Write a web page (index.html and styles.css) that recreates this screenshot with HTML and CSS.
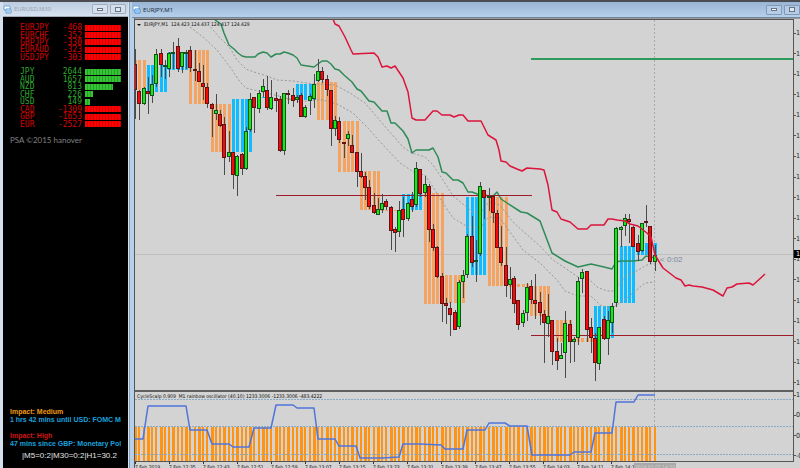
FILE: index.html
```html
<!DOCTYPE html>
<html lang="en">
<head>
  <meta charset="UTF-8" />
  <meta name="viewport" content="width=device-width, initial-scale=1.0" />
  <title>EURJPY,M1</title>
  <link rel="stylesheet" href="styles.css">
</head>
<body>
  <section class="window side">
    <header class="titlebar">
      <svg class="app-icon" viewBox="0 0 9 9"><path d="M1 1h6v4H1z" fill="#fff" stroke="#6fa8dc"/><path d="M3 4h5v4H3z" fill="#eaf4ff" stroke="#5b9bd5"/><path d="M4 6h3" stroke="#5b9bd5"/></svg>
      <h1>EURUSD,M30</h1>
      <button class="win-btn" aria-label="Minimize"><span class="min"></span></button>
      <button class="win-btn" aria-label="Maximize"><span class="max"></span></button>
    </header>
    <div class="strength">
      <table class="pairs">
        <tbody id="pairs"></tbody>
      </table>
      <table class="currencies">
        <tbody id="currencies"></tbody>
      </table>
      <p class="credit">PSA ©2015 hanover</p>
      <div class="news">
        <p class="medium">Impact: Medium</p>
        <p>1 hrs 42 mins until USD: FOMC Member</p>
        <p class="high">Impact: High</p>
        <p>47 mins since GBP: Monetary Policy</p>
        <p class="spread">|M5=0:2|M30=0:2|H1=30.2</p>
      </div>
    </div>
  </section>

  <section class="window chart">
    <header class="titlebar">
      <svg class="app-icon" viewBox="0 0 9 9"><path d="M1 1h6v4H1z" fill="#fff" stroke="#6fa8dc"/><path d="M3 4h5v4H3z" fill="#eaf4ff" stroke="#3f8fdc"/><path d="M4 6h3" stroke="#3f8fdc"/></svg>
      <h1>EURJPY,M1</h1>
      <button class="win-btn" aria-label="Minimize"><span class="min"></span></button>
      <button class="win-btn" aria-label="Maximize"><span class="max"></span></button>
    </header>
    <div class="sheet">
      <div class="pane price-pane">
        <svg id="price" class="plot"></svg>
        <p class="legend"><span class="arrow"></span>EURJPY,M1&nbsp; 124.423 124.437 124.417 124.429</p>
      </div>
      <div class="scale price-scale" id="scale"></div>
      <div class="pane osc-pane">
        <svg id="osc" class="plot"></svg>
        <p class="legend">CycleScalp 0.909 &nbsp;M1 rainbow oscillator (40,10) 1233.3006 -1233.3006 -483.4222</p>
      </div>
      <div class="scale osc-scale"><span>1</span><span>0.8</span><span class="mid">0</span><span>-0.8</span></div>
      <div class="times" id="times"></div>
    </div>
  </section>

  <script src="script.js"></script>
</body>
</html>
```
FILE: styles.css
```css
* {
  box-sizing: border-box;
}

body {
  margin: 0;
  height: 100vh;
  display: flex;
  overflow: hidden;
  border-top: 2px solid #4b4d52;
  background: #b7d0ea;
  font-family: "Noto Sans", "Liberation Sans", sans-serif;
}

h1, p {
  margin: 0;
}

h1 {
  font-weight: normal;
}

.window {
  display: flex;
  flex-direction: column;
}

.titlebar {
  display: flex;
  align-items: center;
  gap: 2px;
  flex: none;
  height: 16px;
}

.titlebar h1 {
  flex: 1;
  font-size: 6px;
  line-height: 10px;
  color: #1b2b40;
}

.app-icon {
  width: 9px;
  height: 9px;
}

.win-btn {
  display: flex;
  justify-content: center;
  align-items: center;
  width: 16px;
  height: 10px;
  padding: 0;
  border: 1px solid #8399b5;
  border-radius: 1px;
  background: #b4cce8;
}

.min {
  width: 6px;
  height: 3px;
  border: 1px solid #6a7482;
  background: #fff;
}

.max {
  width: 6px;
  height: 5px;
  border: 1px solid #6a7482;
  background: #dfe6ee;
}

/* left window */
.side {
  flex: none;
  width: 129px;
  padding: 0 1px 0 3px;
  background: #d3e0ee;
}

.side .titlebar {
  height: 15px;
  padding-right: 2px;
  border-bottom: 1px solid #a3abb5;
  background: linear-gradient(#bccde0, #d6e2ef);
}

.side .titlebar h1 {
  color: #98a2ae;
}

.side .win-btn {
  background: #d3dfec;
  border-color: #a2acba;
}

.strength {
  flex: 1;
  display: flex;
  flex-direction: column;
  padding: 7px 7px 6px;
  background: #000;
}

table {
  border-collapse: collapse;
  margin-left: 10px;
  width: 101px;
  table-layout: fixed;
  font: 8px/7px "DejaVu Sans Mono", monospace;
}

td {
  padding: 0;
}

td:nth-child(1) {
  width: 32px;
}

td:nth-child(2) {
  width: 30px;
  text-align: right;
}

td:nth-child(3) {
  width: 39px;
  padding-left: 3px;
}

.pairs {
  height: 37px;
}

.currencies {
  height: 60px;
  margin-top: 7px;
}

.down {
  color: #d80000;
}

.up {
  color: #2fa82f;
}

.bar {
  display: block;
  height: 6px;
  background: repeating-linear-gradient(90deg, #ff0000 0 2px, #d00000 2px 3px);
}

.up .bar {
  background: repeating-linear-gradient(90deg, #35c435 0 2px, #27a027 2px 3px);
}

.credit {
  margin-top: 7px;
  font-family: Lato, "Liberation Sans", sans-serif;
  font-size: 8px;
  line-height: 11px;
  color: #808080;
}

.news {
  margin-top: auto;
  overflow: hidden;
  white-space: nowrap;
  font: bold 7px/8px "Liberation Sans", sans-serif;
  color: #1aa0dc;
}

.news .medium {
  color: #f09a10;
}

.news .high {
  margin-top: 8px;
  color: #d01414;
}

.news .spread {
  margin: 2px 0 0 12px;
  font-weight: normal;
  font-size: 8px;
  line-height: 12px;
  color: #e4e4e4;
}

/* chart window */
.chart {
  flex: 1;
  min-width: 0;
  padding-left: 4px;
  border-left: 1px solid #8d9fb4;
}

.chart .titlebar {
  margin-left: -2px;
  background: linear-gradient(#9ab5d4, #b5cfeb);
  border-bottom: 1px solid #75879c;
}

.sheet {
  flex: 1;
  display: grid;
  grid-template-columns: 1fr 6px;
  grid-template-rows: 371px 72px auto;
  border-left: 1px solid #555;
  border-top: 1px solid #999;
  background: #d3d3d3;
}

.pane {
  position: relative;
  min-width: 0;
  border-right: 1px solid #555;
  border-top: 1px solid #555;
}

.osc-pane {
  border-top: 2px solid #606060;
  border-bottom: 1px solid #555;
}

.plot {
  display: block;
  width: 100%;
  height: 100%;
}

.legend {
  position: absolute;
  left: 2px;
  top: 0;
  font: 5px/8px "DejaVu Sans Condensed", "DejaVu Sans", sans-serif;
  color: #111;
  white-space: nowrap;
}

.arrow {
  display: inline-block;
  margin-right: 3px;
  border: 2px solid transparent;
  border-top-color: #111;
  border-bottom: 0;
  vertical-align: middle;
}

.scale {
  position: relative;
  display: flex;
  flex-direction: column;
  justify-content: space-between;
  overflow: hidden;
  font: 7px/8px "DejaVu Sans Condensed", "DejaVu Sans", sans-serif;
  color: #222;
}

.scale span {
  padding-left: 2px;
  background: linear-gradient(#555, #555) 0 50% / 2px 1px no-repeat;
}

.price-scale {
  padding: 10px 0 3px;
}

.scale .now {
  position: absolute;
  left: 0;
  top: 231px;
  width: 100%;
  background: #000;
  color: #fff;
}

.osc-scale {
  padding: 1px 0 2px;
}

.times {
  grid-column: 1 / -1;
  position: relative;
  display: flex;
  overflow: hidden;
  height: 12px;
  font: 5px/11px "DejaVu Sans Condensed", "DejaVu Sans", sans-serif;
  color: #111;
}

.times span {
  flex: none;
  width: 34px;
  white-space: nowrap;
  background: linear-gradient(#333, #333) 0 0 / 1px 2px no-repeat;
}

.times .cursor {
  position: absolute;
  left: 499px;
  top: 1px;
  width: 42px;
  background: #a9a9a9;
  color: #d3d3d3;
  line-height: 9px;
  text-align: center;
}

/* drawing */
.band-up { fill: #0ebcff; }
.band-down { fill: #f4a460; }
.wick { fill: #4a4a4a; }
.bull-edge { fill: #14501c; }
.bear-edge { fill: #5c1414; }
.bull { fill: #10ee10; }
.bear { fill: #f80808; }
.bands, .candles, .bars, .levels { shape-rendering: crispEdges; }
.line { fill: none; stroke-width: 1.5; stroke-linejoin: round; }
.slow { stroke: #2e8b57; }
.stop { stroke: #dc143c; }
.line.average { stroke: #999; stroke-width: 1; stroke-dasharray: 2 2; }
.level-red { stroke: #9a1c28; }
.level-green { stroke: #2e9a5c; stroke-width: 2; }
.bid { stroke: #bdbdbd; }
.cursor-line { stroke: #aaa; stroke-dasharray: 2 2; }
.countdown { font: 8px "Liberation Sans", sans-serif; fill: #778899; }
.bars rect { fill: #ff9412; }
.osc-level { stroke: #86a9c6; stroke-dasharray: 2 1; }
.cycle { stroke: #4f74dc; }
```
FILE: script.js
```js
const pairs = [
  ['EURJPY', -468, 36], ['EURCHF', -352, 36], ['GBPJPY', -330, 36],
  ['EURAUD', -323, 36], ['USDJPY', -303, 36]
];
const currencies = [
  ['JPY', 2644, 36], ['AUD', 1657, 36], ['NZD', 813, 28], ['CHF', 226, 8],
  ['USD', 149, 5], ['CAD', -1309, 36], ['GBP', -1653, 36], ['EUR', -2527, 36]
];

const rows = (list) => list.map(([name, value, width]) =>
  `<tr class="${value < 0 ? 'down' : 'up'}"><td>${name}</td><td>${value}</td>` +
  `<td><span class="bar" style="width:${width}px"></span></td></tr>`).join('');

document.getElementById('pairs').innerHTML = rows(pairs);
document.getElementById('currencies').innerHTML = rows(currencies);

// high, low, body top, body bottom, 1 = bull / 0 = bear
const candles = [
  [49,119,64,90,0],[90,120,91,104,0],[87,105,88,104,1],[77,114,91,94,0],[75,103,84,96,1],
  [49,87,54,84,1],[49,77,53,65,0],[60,79,65,67,1],[52,77,53,69,1],[42,69,52,53,1],
  [38,72,46,69,0],[52,73,52,67,1],[50,69,52,53,1],[46,72,50,68,0],[50,81,69,70,0],
  [63,82,71,82,0],[65,100,83,87,0],[83,108,87,104,0],[103,137,104,109,0],[94,120,110,114,1],
  [110,127,114,126,0],[117,175,124,158,0],[131,162,152,157,1],[152,189,152,175,0],[155,196,156,176,1],
  [153,175,154,169,0],[127,170,131,169,1],[93,132,99,130,1],[97,133,97,108,0],[90,113,93,109,1],
  [79,97,86,92,1],[76,110,90,108,0],[80,110,97,109,1],[92,112,98,101,0],[96,152,99,151,0],
  [93,155,93,151,1],[90,104,93,94,0],[88,107,95,101,0],[95,103,97,100,1],[93,117,95,117,0],
  [105,118,107,117,1],[94,115,96,101,1],[74,108,84,99,1],[59,82,71,81,1],[67,83,71,80,0],
  [75,96,79,90,0],[90,146,90,129,0],[116,136,120,129,1],[117,143,121,140,0],[142,158,142,143,0],
  [131,146,134,139,1],[135,153,145,153,0],[152,187,152,172,0],[153,178,171,177,0],[172,200,176,188,0],
  [180,209,187,207,0],[193,214,205,213,0],[198,215,209,215,1],[194,213,203,210,1],[199,210,201,207,0],
  [206,250,207,231,0],[227,252,229,233,0],[201,237,210,232,1],[197,237,209,220,0],[202,221,203,219,1],
  [192,212,199,207,0],[162,207,168,205,1],[169,197,169,194,0],[176,197,184,193,1],[184,242,186,230,0],
  [224,251,229,248,0],[246,278,247,277,0],[273,322,276,304,0],[298,324,303,306,0],[302,336,308,315,0],
  [310,330,312,330,0],[280,329,282,327,1],[270,298,275,282,1],[234,278,236,275,1],[216,267,236,263,0],
  [240,282,260,262,1],[182,256,186,254,1],[190,219,190,198,0],[188,211,196,197,1],[195,223,196,213,0],
  [210,248,213,248,0],[226,266,247,263,0],[247,297,265,286,0],[267,299,279,285,1],[276,313,278,304,0],
  [300,330,300,325,0],[310,327,313,323,1],[283,321,287,313,1],[280,304,286,300,0],[274,319,300,304,0],
  [292,325,302,313,0],[310,363,314,323,0],[294,337,316,324,1],[320,365,320,352,0],[338,370,351,361,0],
  [343,359,355,359,1],[311,378,323,353,1],[320,363,324,342,0],[337,362,339,342,1],[277,345,281,338,1],
  [269,293,272,279,1],[271,342,271,330,0],[318,353,327,338,0],[333,381,338,363,0],[327,370,327,364,1],
  [316,340,319,339,0],[311,355,320,339,1],[303,333,306,323,1],[227,307,228,303,1],[226,247,227,230,1],
  [214,236,218,226,1],[214,243,219,222,0],[226,247,227,247,0],[235,261,243,252,0],[223,252,223,251,1],
  [205,227,221,223,0],[226,264,226,262,0],[245,271,255,262,1]
];

// first candle, last candle, top, bottom, 1 = up / 0 = down
const bands = [
  [0,2,60,90,0],[3,7,65,92,1],[8,12,52,70,1],[13,17,50,104,0],[18,22,104,152,0],[23,27,99,152,1],
  [28,32,97,98,1],[33,37,98,100,0],[38,42,84,100,1],[43,47,82,120,0],[48,52,121,172,0],
  [53,57,171,210,0],[58,62,210,211,0],[63,67,194,210,1],[68,72,193,304,0],[73,77,275,303,0],
  [78,82,197,275,1],[83,87,197,286,0],[88,92,284,287,0],[93,97,286,316,0],[98,102,320,342,0],
  [103,107,338,342,0],[108,112,306,338,1],[113,117,246,303,1],[118,122,243,255,1]
];

const slow = '215,20 221,24 224,33 229,45 234,49 238,53 242,56 246,57 255,57 258,54 263,52 267,53 271,57 276,54 280,54 284,52 288,53 293,55 297,58 301,65 314,67 322,61 327,61 331,64 335,69 339,70 344,75 352,82 357,89 361,91 369,101 374,102 382,111 387,111 391,123 395,123 403,131 408,139 412,153 416,150 429,150 433,148 438,157 442,172 446,173 453,180 458,180 463,183 468,192 472,192 480,195 493,196 497,192 501,199 507,203 521,212 527,213 540,221 552,253 565,261 578,267 591,264 604,267 612,269 616,262 621,261 633,261 642,260 646,256 655,258';
const stop = '333,19 335,24 339,26 345,37 351,50 353,54 374,53 378,57 382,67 387,66 391,68 395,66 399,72 403,78 408,92 412,118 416,120 425,120 433,111 437,111 442,115 450,115 454,117 459,115 463,115 468,121 481,121 488,135 496,140 499,150 501,161 506,162 510,166 517,169 522,171 527,168 540,169 544,170 548,185 552,210 557,212 561,219 570,222 578,229 587,229 591,225 604,225 608,219 612,219 617,220 625,221 630,224 638,226 647,233 651,237 655,255 663,268 676,278 681,280 685,286 689,285 693,286 702,287 713,290 723,296 727,288 732,287 737,284 749,283 753,285 765,274';
const upper = '208,24 219,37 230,48 237,60 246,69 254,72 267,76 277,80 293,81 314,84 335,85 350,93 365,103 377,117 388,130 403,147 412,153 425,157 433,165 443,180 453,196 468,208 472,212 480,213 489,202 500,205 513,222 525,233 540,246 553,260 565,268 578,277 587,277 597,287 607,291 613,291 625,277 633,273 647,265 655,263';
const lower = '190,27 203,37 217,50 230,67 240,82 246,88 258,91 283,97 300,102 314,100 323,100 337,104 353,113 367,127 383,145 400,163 415,173 425,175 433,187 443,203 453,218 468,227 480,228 489,217 500,218 510,232 523,250 540,263 557,280 565,291 578,296 591,296 600,305 610,309 620,303 633,293 645,283 655,282';
const cycle = '135,439 143,439 148,406 186,406 190,430 207,430 212,444 229,444 233,447 249,447 254,428 271,428 276,405 293,405 297,408 314,408 318,439 335,439 339,446 356,446 360,458 382,458 399,457 403,444 420,444 441,445 445,449 463,449 467,430 485,430 489,423 505,423 510,426 527,426 532,455 570,455 574,452 591,452 595,433 612,433 616,402 634,402 638,395 655,395';

const LEFT = 135;
const STEP = 4.26;
const xOf = (i) => Math.round(LEFT + i * STEP);
const rect = (x, y, w, h, cls = '') => `<rect class="${cls}" x="${x}" y="${y}" width="${w}" height="${h}"/>`;
const hline = (x, y, cls, x2 = '200%') => `<line class="${cls}" x1="${x}" x2="${x2}" y1="${y}" y2="${y}"/>`;
const poly = (points, cls) => `<polyline class="line ${cls}" points="${points}"/>`;

const drawBands = () => bands.map(([from, to, top, bottom, up]) => {
  let out = '';
  for (let i = from; i <= to; i++) {
    out += rect(xOf(i) - 1, top, 3, bottom - top, up ? 'band-up' : 'band-down');
  }
  return out;
}).join('');

// dark body first, then the bright core inside it
const drawCandles = () => candles.map(([high, low, top, bottom, bull], i) => {
  const x = xOf(i);
  const kind = bull ? 'bull' : 'bear';
  const height = Math.max(bottom - top, 2);
  return rect(x, high, 1, low - high, 'wick') +
    rect(x - 2, top, 4, height, kind + '-edge') +
    rect(x - 1, top + 1, 2, Math.max(height - 2, 0), kind);
}).join('');

document.getElementById('price').innerHTML = `<g transform="translate(-135 -20)">
  <g class="levels">${hline(135, 254.5, 'bid')}
  <line class="cursor-line" x1="654.5" x2="654.5" y1="20" y2="392"/></g>
  <g class="bands">${drawBands()}</g>
  ${poly(upper, 'average')}${poly(lower, 'average')}
  ${poly(slow, 'slow')}
  <g class="levels">${hline(276, 195.5, 'level-red', 532)}${hline(531, 335.5, 'level-red')}${hline(531, 59, 'level-green')}</g>
  <g class="candles">${drawCandles()}</g>
  ${poly(stop, 'stop')}
  <text class="countdown" x="660" y="262">&lt; 0:02</text>
</g>`;

document.getElementById('osc').innerHTML = `<g transform="translate(-135 -392)">
  <g class="levels">${hline(135, 399.5, 'osc-level')}${hline(135, 426.5, 'osc-level')}
  <line class="cursor-line" x1="654.5" x2="654.5" y1="392" y2="426"/></g>
  <g class="bars">${candles.map((c, i) => rect(xOf(i) - 1, 427, i % 3 ? 2 : 3, 35)).join('')}</g>
  <g class="levels">${hline(135, 454.5, 'osc-level')}</g>
  ${poly(cycle, 'cycle')}
</g>`;

let scale = '';
for (let i = 0; i < 18; i++) {
  scale += `<span>${(124.9 - i * 0.045).toFixed(3)}</span>`;
}
document.getElementById('scale').innerHTML = scale + '<span class="now">124.429</span>';

const times = ['2019', '12:35', '12:43', '12:51', '12:59', '13:07', '13:15', '13:23',
  '13:31', '13:39', '13:47', '13:55', '14:03', '14:11', '14:19'];
document.getElementById('times').innerHTML =
  times.map((t) => `<span>7 Feb ${t}</span>`).join('') + '<span class="cursor">2019.02.07 14:20</span>';
```
